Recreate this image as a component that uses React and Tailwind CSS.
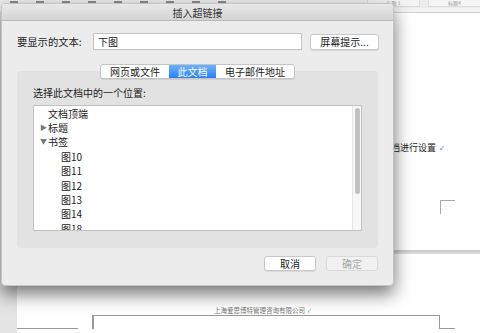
import React from "react";

const font = { fontFamily: '"Noto Sans CJK SC", "Noto Sans", sans-serif' };

const bookmarks = ["图10", "图11", "图12", "图13", "图14", "图18"];

const ListRow = ({ indent, arrow, children }) => (
  <div className={`flex items-center h-[14.4px] ${indent}`}>
    {arrow === "right" && (
      <span className="w-[8px] text-[7px] leading-none text-[#777]">▶</span>
    )}
    {arrow === "down" && (
      <span className="w-[8px] text-[7px] leading-none text-[#777]">▼</span>
    )}
    <span>{children}</span>
  </div>
);

const Dialog = () => (
  <div className="absolute left-[1px] top-[3px] w-[393px] h-[283px] bg-[#ececec] rounded-[4px] border border-[#c4c4c4] shadow-[0_8px_18px_rgba(0,0,0,0.55)] flex flex-col overflow-hidden text-[10px] text-[#222]">
    {/* Title */}
    <div className="h-[17px] shrink-0 bg-gradient-to-b from-[#e8e8e8] to-[#d4d4d4] border-b border-[#b8b8b8] flex items-center justify-center text-[#333]">
      插入超链接
    </div>

    {/* Display text */}
    <div className="flex items-center mt-[12px] pl-[15px]">
      <span className="w-[76px] text-[10.3px]">要显示的文本:</span>
      <div className="w-[209px] h-[17px] bg-white border border-[#c3c3c3] flex items-center pl-[4px] text-[10px]">
        下图
      </div>
      <div className="ml-[8px] w-[69px] h-[16px] bg-white rounded-[3px] border border-[#c9c9c9] shadow-[0_1px_0_rgba(0,0,0,0.08)] flex items-center justify-center">
        屏幕提示...
      </div>
    </div>

    {/* Tabs */}
    <div className="relative z-10 flex justify-center mt-[14px]">
      <div className="flex h-[15px] rounded-[3px] border border-[#c4c4c4] bg-white shadow-[0_1px_0_rgba(0,0,0,0.08)] overflow-hidden">
        <div className="w-[68px] flex items-center justify-center">网页或文件</div>
        <div className="w-[47px] flex items-center justify-center bg-gradient-to-b from-[#6cb2fb] to-[#2b7ef3] text-white">
          此文档
        </div>
        <div className="w-[78px] flex items-center justify-center">电子邮件地址</div>
      </div>
    </div>

    {/* Group */}
    <div className="-mt-[8px] mx-[15px] h-[177px] bg-[#e2e2e2] rounded-[4px] px-[16px] pt-[15px]">
      <div className="h-[14px] leading-[14px]">选择此文档中的一个位置:</div>
      <div className="mt-[5px] h-[126px] bg-white border border-[#c2c2c2] flex overflow-hidden">
        <div className="flex-1 overflow-hidden">
          <ListRow indent="pl-[14px]">文档顶端</ListRow>
          <ListRow indent="pl-[6px]" arrow="right">标题</ListRow>
          <ListRow indent="pl-[6px]" arrow="down">书签</ListRow>
          {bookmarks.map((b) => (
            <ListRow key={b} indent="pl-[27px]">
              {b}
            </ListRow>
          ))}
        </div>
        <div className="w-[9px] bg-[#f7f7f7] border-l border-[#e6e6e6] pt-[2px] flex justify-center">
          <div className="w-[5px] h-[86px] rounded-full bg-[#c1c1c1]" />
        </div>
      </div>
    </div>

    {/* Buttons */}
    <div className="flex justify-end gap-[10px] mt-[8px] pr-[15px]">
      <div className="w-[52px] h-[15px] bg-white rounded-[3px] border border-[#c9c9c9] shadow-[0_1px_0_rgba(0,0,0,0.08)] flex items-center justify-center">
        取消
      </div>
      <div className="w-[52px] h-[15px] bg-[#f1f1f1] rounded-[3px] border border-[#dadada] flex items-center justify-center text-[#a8a8a8]">
        确定
      </div>
    </div>
  </div>
);

export default function App() {
  return (
    <div
      className="relative w-[480px] h-[333px] overflow-hidden bg-white flex flex-col"
      style={font}
    >
      {/* Toolbar */}
      <div className="h-[8px] shrink-0 bg-[#ececec] flex items-start">
        <div className="flex gap-[18px] pl-[10px] pt-[1px]">
          {[0, 1, 2, 3, 4, 5, 6, 7, 8].map((i) => (
            <div key={i} className="w-[8px] h-[2px] bg-[#8a8a8a]" />
          ))}
        </div>
        <div className="ml-auto flex gap-[8px] pr-0">
          <div className="w-[53px] h-[7px] bg-[#f4f4f4] border-x border-b border-[#dadada] text-[5px] leading-[5px] text-[#999] text-center">
            标题 1
          </div>
          <div className="w-[52px] h-[7px] bg-[#f4f4f4] border-l border-b border-[#dadada] text-[5px] leading-[5px] text-[#999] text-center">
            标题4
          </div>
        </div>
      </div>
      {/* Ruler strip */}
      <div className="h-[5px] shrink-0 bg-[#f3f3f3] border-b border-[#d2d2d2]" />

      {/* Document area */}
      <div className="flex flex-1">
        <div className="w-[17px] bg-[#e4e4e4]" />
        <div className="flex-1 flex flex-col bg-white">
          <div className="flex flex-col pl-[376px] pt-[129px]">
            <div className="flex items-center text-[9px] leading-[12px] text-[#222] -ml-[2px]">
              档进行设置
              <span className="ml-[3px] text-[6px] text-[#5b8de0]">↙</span>
            </div>
            <div className="ml-[47px] mt-[46px] w-[15px] h-[14px] border-l border-t border-[#aaa]" />
          </div>
          <div className="mt-[36px] h-[4px] bg-gradient-to-b from-[#c9c9c9] to-[#dddddd]" />
          <div className="mt-[52px] pl-[197px] text-[6.5px] leading-[8px] text-[#777] flex items-center">
            上海爱思博特管理咨询有限公司
            <span className="ml-[2px] text-[5px] text-[#5b8de0]">↙</span>
          </div>
          <div className="mt-[1px] flex">
            <div className="w-[61px] h-[14px] border-b border-[#999] self-start" />
            <div className="w-[15px] h-[14px] border-r border-[#999]" />
            <div className="w-[347px] h-[14px] border-t border-x border-[#999]" />
            <div className="w-[15px] h-[14px] border-b border-[#999]" />
          </div>
        </div>
      </div>

      <Dialog />
    </div>
  );
}
